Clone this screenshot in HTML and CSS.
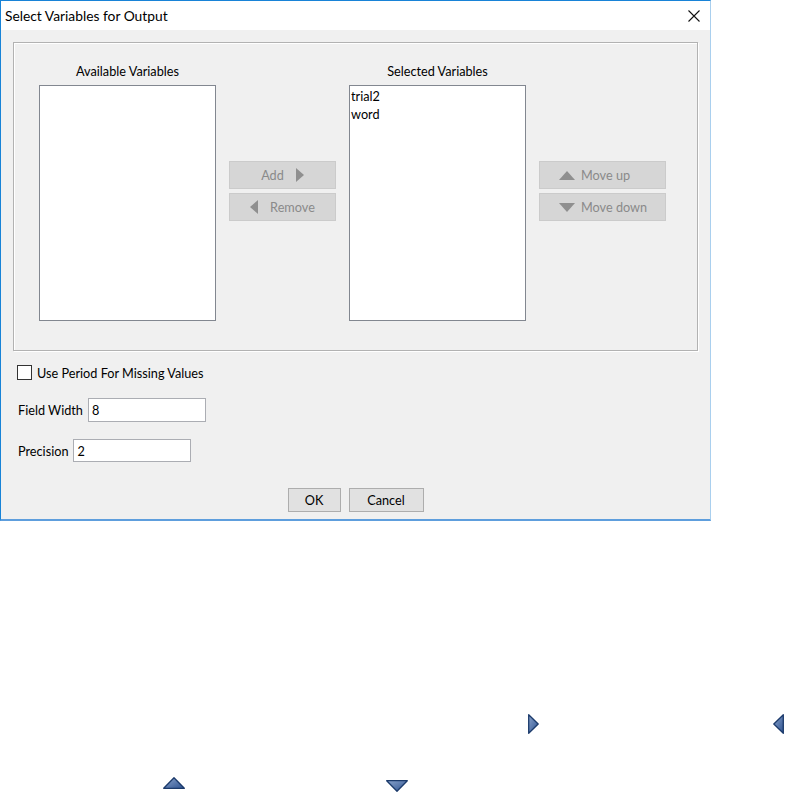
FILE: index.html
```html
<!DOCTYPE html>
<html lang="en">
<head>
    <meta charset="UTF-8">
    <title>Select Variables for Output</title>
    <link rel="stylesheet" href="styles.css">
</head>
<body>
    <div class="window">
        <div class="titlebar">
            <span class="title">Select Variables for Output</span>
            <svg class="close" width="12" height="12" viewBox="0 0 12 12">
                <path d="M0.5 0.5 L11.5 11.5 M11.5 0.5 L0.5 11.5" stroke="#111" stroke-width="1.1" fill="none"/>
            </svg>
        </div>
        <div class="content">
            <div class="group">
                <div class="list-col">
                    <div class="list-label">Available Variables</div>
                    <div class="list"></div>
                </div>
                <div class="button-col">
                    <button class="tool-button centered" disabled>
                        Add
                        <svg class="icon-right" width="8" height="14" viewBox="0 0 8 14"><polygon points="0,0 8,7 0,14" fill="#8f8f8f"/></svg>
                    </button>
                    <button class="tool-button centered" disabled>
                        <svg class="icon-left" width="8" height="14" viewBox="0 0 8 14"><polygon points="8,0 0,7 8,14" fill="#8f8f8f"/></svg>
                        Remove
                    </button>
                </div>
                <div class="list-col">
                    <div class="list-label">Selected Variables</div>
                    <div class="list">
                        <div class="list-item">trial2</div>
                        <div class="list-item">word</div>
                    </div>
                </div>
                <div class="button-col move-col">
                    <button class="tool-button" disabled>
                        <svg class="icon-up" width="16" height="9" viewBox="0 0 16 9"><polygon points="0,9 8,0 16,9" fill="#8f8f8f"/></svg>
                        Move up
                    </button>
                    <button class="tool-button" disabled>
                        <svg class="icon-up" width="16" height="9" viewBox="0 0 16 9"><polygon points="0,0 16,0 8,9" fill="#8f8f8f"/></svg>
                        Move down
                    </button>
                </div>
            </div>

            <label class="check-row">
                <span class="checkbox"></span>
                Use Period For Missing Values
            </label>

            <div class="field-row">
                <span class="field-label">Field Width</span>
                <input class="field" type="text" value="8">
            </div>
            <div class="field-row precision">
                <span class="field-label">Precision</span>
                <input class="field" type="text" value="2">
            </div>

            <div class="dialog-buttons">
                <button class="dialog-button ok">OK</button>
                <button class="dialog-button cancel">Cancel</button>
            </div>
        </div>
    </div>

    <div class="icon-row first">
        <svg class="blue-icon" style="margin-left: 528px" width="11" height="20" viewBox="0 0 11 20">
            <defs>
                <linearGradient id="gr" x1="0" y1="0" x2="1" y2="1">
                    <stop offset="0" stop-color="#8ba4cc"/>
                    <stop offset="1" stop-color="#2d5290"/>
                </linearGradient>
            </defs>
            <polygon points="0.7,0.7 10.2,10 0.7,19.3" fill="url(#gr)" stroke="#1b3a6b" stroke-width="1.3" stroke-linejoin="round"/>
        </svg>
        <svg class="blue-icon" style="margin-left: 234px" width="11" height="20" viewBox="0 0 11 20">
            <polygon points="10.3,0.7 0.8,10 10.3,19.3" fill="url(#gr)" stroke="#1b3a6b" stroke-width="1.3" stroke-linejoin="round"/>
        </svg>
    </div>
    <div class="icon-row second">
        <svg class="blue-icon" style="margin-left: 163px" width="22" height="12" viewBox="0 0 22 12">
            <polygon points="0.7,11.3 11,0.8 21.3,11.3" fill="url(#gr)" stroke="#1b3a6b" stroke-width="1.3" stroke-linejoin="round"/>
        </svg>
        <svg class="blue-icon" style="margin-left: 201px; margin-top: 3px" width="22" height="12" viewBox="0 0 22 12">
            <polygon points="0.7,0.7 21.3,0.7 11,11.2" fill="url(#gr)" stroke="#1b3a6b" stroke-width="1.3" stroke-linejoin="round"/>
        </svg>
    </div>
</body>
</html>
```

FILE: styles.css
```css
body {
    margin: 0;
    background-color: #FFFFFF;
    font-family: "Segoe UI", Lato, "Noto Sans", sans-serif;
    font-size: 12.7px;
    color: #000000;
}
.window {
    width: 711px;
    box-sizing: border-box;
    border-top: 1px solid #1883D7;
    border-left: 1px solid #1883D7;
    border-right: 1px solid #A9CFEE;
    border-bottom: 2px solid #5E9EDD;
}
.titlebar {
    height: 29px;
    background-color: #FFFFFF;
    display: flex;
    align-items: center;
    justify-content: space-between;
    padding: 0 10px 0 4px;
}
.title {
    font-size: 13.8px;
}
.close {
    margin-top: 1px;
}
.content {
    background-color: #F0F0F0;
    padding: 12px 0 7px 0;
}
.group {
    margin: 0 12px;
    height: 309px;
    box-sizing: border-box;
    border: 1px solid #B2B2B2;
    box-shadow: inset 1px 1px 0 #FFFFFF, 1px 1px 0 #FFFFFF;
    display: flex;
    align-items: flex-start;
    padding-left: 25px;
    gap: 13px;
}
.list-col {
    width: 177px;
    padding-top: 20px;
}
.list-label {
    text-align: center;
    line-height: 16px;
    margin-bottom: 6px;
}
.list {
    height: 236px;
    box-sizing: border-box;
    background-color: #FFFFFF;
    border: 1px solid #828790;
    padding: 1px 1px;
}
.list-item {
    line-height: 18px;
    height: 18px;
}
.button-col {
    width: 107px;
    padding-top: 118px;
    display: flex;
    flex-direction: column;
    gap: 4px;
}
.move-col {
    width: 127px;
}
.tool-button {
    height: 28px;
    background-color: #D6D6D6;
    border: 1px solid #CBCBCB;
    color: #8A8A8A;
    font-family: inherit;
    font-size: 12.7px;
    display: flex;
    align-items: center;
    padding: 0 0 0 19px;
    gap: 6px;
}
.tool-button.centered {
    justify-content: center;
    padding: 0;
    gap: 12px;
}
.check-row {
    display: flex;
    align-items: center;
    gap: 5px;
    margin: 14px 0 0 16px;
    height: 15px;
}
.checkbox {
    width: 13px;
    height: 13px;
    border: 1px solid #333333;
    background-color: #FFFFFF;
}
.field-row {
    display: flex;
    align-items: center;
    margin: 18px 0 0 17px;
    gap: 5px;
}
.field-row.precision {
    margin-top: 17px;
}
.field {
    width: 118px;
    height: 24px;
    box-sizing: border-box;
    border: 1px solid #ABADB3;
    padding: 0 3px;
    font-family: inherit;
    font-size: 12.7px;
}
.precision .field {
    height: 23px;
}
.dialog-buttons {
    display: flex;
    justify-content: center;
    gap: 8px;
    margin-top: 26px;
}
.dialog-button {
    height: 24px;
    background-color: #E1E1E1;
    border: 1px solid #ADADAD;
    font-family: inherit;
    font-size: 12.7px;
    color: #000000;
    padding: 0;
}
.dialog-button.ok {
    width: 53px;
}
.dialog-button.cancel {
    width: 75px;
}
.icon-row {
    display: flex;
    align-items: flex-start;
}
.icon-row.first {
    margin-top: 193px;
}
.icon-row.second {
    margin-top: 43px;
}
```
